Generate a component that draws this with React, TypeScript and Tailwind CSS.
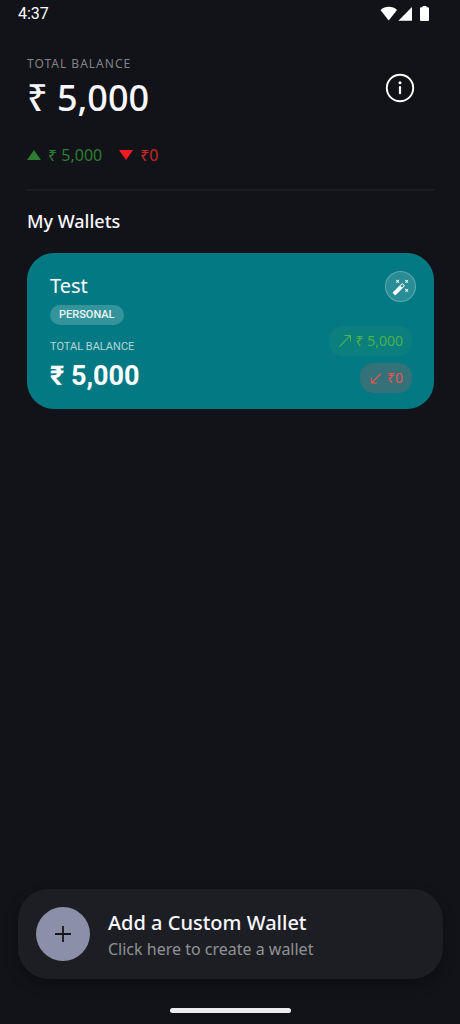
import type { ReactNode } from 'react';
import { MdAutoFixHigh } from 'react-icons/md';

type Wallet = {
  name: string;
  kind: string;
  balance: string;
  income: string;
  expense: string;
};

const wallets: Wallet[] = [
  { name: 'Test', kind: 'PERSONAL', balance: '₹ 5,000', income: '₹ 5,000', expense: '₹0' },
];

function StatusBar() {
  return (
    <div className="flex h-7 items-center justify-between pr-[31px] pl-[18px] font-['Roboto',sans-serif] text-base text-white">
      <span>4:37</span>
      <div className="flex items-center pb-[2px]">
        <svg width="18" height="15" viewBox="0 0 18 15" fill="currentColor">
          <path d="M.5 4C5-.2 13-.2 17 4L8.700 14.500Z" />
        </svg>
        <svg width="15" height="15" viewBox="0 0 15 15" fill="currentColor">
          <path d="M14 1V14.700H.4Z" />
        </svg>
        <svg className="ml-[7px]" width="9" height="15" viewBox="0 0 9 15" fill="currentColor">
          <path d="M2.500 0h4v1.300H8q1 0 1 1V14q0 1-1 1H1q-1 0-1-1V2.300q0-1 1-1h1.500Z" />
        </svg>
      </div>
    </div>
  );
}

function Summary() {
  return (
    <section>
      <div className="flex items-center justify-between pr-[19px]">
        <div>
          <p className="text-xs leading-4 tracking-[1px] text-[#828287]">TOTAL BALANCE</p>
          <p className="mt-[3px] text-4xl leading-[46px] font-medium text-[#f8f6ff]">₹ 5,000</p>
        </div>
        <button type="button" aria-label="Balance info" className="pb-[2px] text-white">
          <svg width="30" height="30" viewBox="0 0 30 30" fill="none" stroke="currentColor">
            <circle cx="15" cy="15" r="13.200" strokeWidth="1.900" />
            <path d="M15 14v6.200" strokeWidth="2.200" strokeLinecap="round" />
            <circle cx="15" cy="9.700" r="1.500" fill="currentColor" stroke="none" />
          </svg>
        </button>
      </div>
      <div className="mt-[22px] flex items-center gap-[17px] text-base leading-6">
        <span className="flex items-center gap-[7px] text-[#2e7d32]">
          <svg width="14" height="10" viewBox="0 0 14 10" fill="currentColor">
            <path d="M7 0l7 10H0Z" />
          </svg>
          ₹ 5,000
        </span>
        <span className="flex items-center gap-[7px] text-[#c62828]">
          <svg width="14" height="10" viewBox="0 0 14 10" fill="#f01c22">
            <path d="M0 0h14L7 10Z" />
          </svg>
          ₹0
        </span>
      </div>
    </section>
  );
}

function Pill({ arrow, className, children }: { arrow: string; className: string; children: ReactNode }) {
  return (
    <span className={`flex h-[30px] items-center gap-1 rounded-[14px] px-[9px] text-sm ${className}`}>
      <svg width="14" height="14" viewBox="0 0 14 14" fill="none" stroke="currentColor" strokeWidth="1.100">
        <path d={arrow} />
      </svg>
      {children}
    </span>
  );
}

function WalletCard({ wallet }: { wallet: Wallet }) {
  return (
    <article className="flex justify-between rounded-[27px] bg-[#037a83] pt-[18px] pr-[18px] pb-4 pl-[23px] text-white">
      <div className="flex flex-col items-start">
        <h3 className="text-xl leading-[30px]">{wallet.name}</h3>
        <span className="mt-1 rounded-full bg-white/20 px-[9px] font-['Roboto',sans-serif] text-[11px] leading-5 font-medium text-white/90">
          {wallet.kind}
        </span>
        <p className="mt-[14px] font-['Roboto',sans-serif] text-[11px] leading-4 text-white/70">TOTAL BALANCE</p>
        <p className="mt-[5px] font-['Roboto',sans-serif] text-[27px] leading-8 font-bold">{wallet.balance}</p>
      </div>
      <div className="flex flex-col items-end">
        <button
          type="button"
          aria-label="Customize wallet"
          className="flex size-[31px] items-center justify-center rounded-full border border-white/25 bg-white/15"
        >
          <MdAutoFixHigh size={18} />
        </button>
        <div className="mt-6 mr-1 flex flex-col items-end gap-[7px]">
          <Pill arrow="M1.500 12.500L12.500 1.500M6.500 1.500H12.500V7.500" className="bg-[#4caf50]/10 text-[#4caf50]">
            {wallet.income}
          </Pill>
          <Pill arrow="M12 2.500L2.500 12M2.500 6.500V12H8" className="bg-[#ef5350]/20 text-[#ef5350]">
            {wallet.expense}
          </Pill>
        </div>
      </div>
    </article>
  );
}

function AddWalletButton() {
  return (
    <button
      type="button"
      className="mr-[17px] mb-[29px] ml-[18px] flex h-[90px] items-center rounded-[31px] bg-[#1d1e23] pl-[18px] text-left shadow-[0_6px_14px_rgba(0,0,0,0.3)]"
    >
      <span className="flex size-[54px] items-center justify-center rounded-full bg-[#8b8fa7] text-[#15161b]">
        <svg width="16" height="16" viewBox="0 0 16 16" fill="none" stroke="currentColor" strokeWidth="1.800">
          <path d="M8 0v16M0 8h16" />
        </svg>
      </span>
      <span className="ml-[18px] flex flex-col pt-[2px]">
        <span className="text-xl leading-7 font-medium text-[#f8f6ff]">Add a Custom Wallet</span>
        <span className="text-base leading-6 text-[#919196]">Click here to create a wallet</span>
      </span>
    </button>
  );
}

export default function App() {
  return (
    <div className="flex min-h-screen flex-col bg-[#121318] font-['Noto_Sans',sans-serif]">
      <StatusBar />
      <main className="flex-1 pt-7 pr-[26px] pl-[27px]">
        <Summary />
        <hr className="mt-[22px] border-t-2 border-[#1c1d21]" />
        <h2 className="mt-4 mb-[18px] text-lg leading-7 font-medium text-[#f8f6ff]">My Wallets</h2>
        {wallets.map((w) => (
          <WalletCard key={w.name} wallet={w} />
        ))}
      </main>
      <AddWalletButton />
      <div className="mb-[11px] h-[5px] w-[121px] self-center rounded-full bg-[#ededed]" />
    </div>
  );
}
